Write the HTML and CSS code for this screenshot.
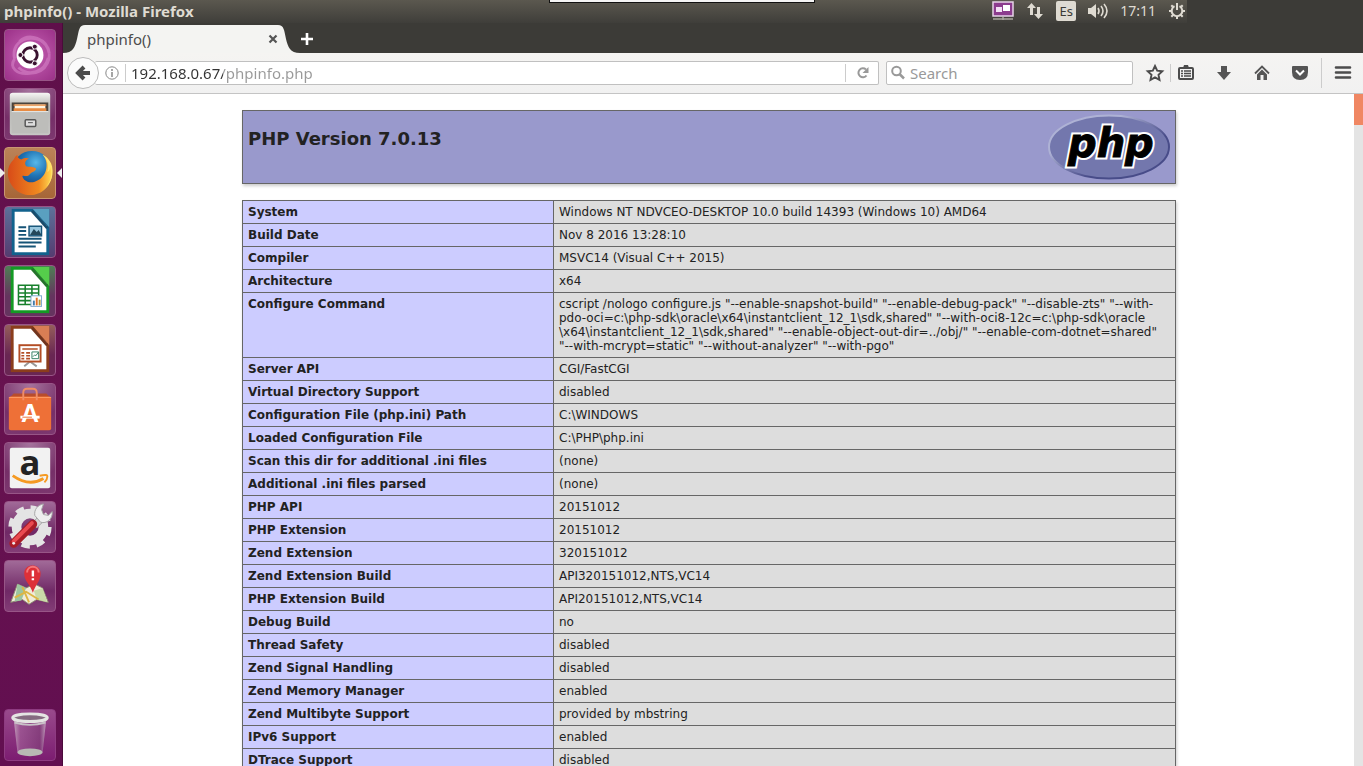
FILE: index.html
```html
<!DOCTYPE html>
<html lang="en">
<head>
<meta charset="utf-8">
<title>phpinfo() - Mozilla Firefox</title>
<link rel="stylesheet" href="styles.css">
</head>
<body>
<header class="panel">
  <span class="panel-title">phpinfo() - Mozilla Firefox</span>
  <div class="remote-handle"></div>
  <div class="indicators">
    <svg width="22" height="20" viewBox="0 0 22 20"><rect x="1" y="1" width="20" height="14" fill="#8c3c8e" stroke="#e6d3e8" stroke-width="1.5"/><rect x="4" y="6" width="6" height="5" fill="#f3dff5"/><rect x="11" y="4" width="7" height="6" fill="#fff"/><path d="M1 18h20M11 16v3" stroke="#a9a79f" stroke-width="1.5"/></svg>
    <svg width="18" height="18" viewBox="0 0 18 18" fill="#dfdbd2"><path d="M5.500 1L10 6H7v7H4V6H1zM12.500 17L8 12h3V5h3v7h3z"/></svg>
    <span class="lang">Es</span>
    <svg width="20" height="18" viewBox="0 0 20 18"><path d="M0 6h3l5-4v14l-5-4H0z" fill="#dfdbd2"/><path d="M10 6q2 3 0 6M13 4q4 5 0 10M16 2q6 7 0 14" fill="none" stroke="#dfdbd2" stroke-width="1.6"/></svg>
    <time class="clock">17:11</time>
    <svg width="18" height="18" viewBox="0 0 18 18" fill="none" stroke="#dfdbd2" stroke-width="2"><path d="M6.500 4.200a5.300 5.300 0 1 0 5 0"/><path d="M9 1v7M1 9h3M14 9h3M3.300 14.700l2-2M14.700 14.700l-2-2M9 14v3M3.300 3.300l1.500 1.500M14.700 3.300l-1.500 1.500"/></svg>
  </div>
</header>
<div class="desktop">
  <nav class="launcher" aria-label="Launcher">
    <button class="tile dash" aria-label="Dash"><svg viewBox="0 0 52 52"><path d="M10 30C5 10 30 2 42 15M42 15c9 12 2 30-16 30M26 45C12 47 4 39 10 30M15 12c10-10 29-3 31 12M45 29c-4 15-20 20-31 10" fill="none" stroke="#dd8dd0" stroke-width="3" opacity=".5"/><circle cx="26" cy="26" r="14" fill="#fff"/><circle cx="26" cy="26" r="7.500" fill="none" stroke="#3a1230" stroke-width="3"/><path d="M26 26l-11 0M26 26l5.500-9.500M26 26l5.500 9.500" stroke="#fff" stroke-width="1"/><g fill="#3a1230" stroke="#fff"><circle cx="16" cy="26" r="2.600"/><circle cx="31" cy="17.300" r="2.600"/><circle cx="31" cy="34.700" r="2.600"/></g></svg></button>
    <button class="tile files" aria-label="Files"><svg viewBox="0 0 52 52"><defs><linearGradient id="gf" x2="0" y2="1"><stop stop-color="#f6f6f4"/><stop offset=".3" stop-color="#b9b9b6"/><stop offset="1" stop-color="#c7c7c4"/></linearGradient></defs><rect x="5" y="4" width="42" height="44" rx="3" fill="url(#gf)"/><path d="M7 14h38v9H7z" fill="#4b443d"/><path d="M10 16h32v7H10z" fill="#fff3df"/><path d="M9 16h34v1.500H9zM9 20h34v3H9z" fill="#e88b43"/><path d="M7 23h38v23H7z" fill="#bdbdba"/><path d="M7 23.500h38" stroke="#e8e8e6"/><rect x="21" y="32" width="11" height="7" rx="1" fill="#ddd" stroke="#555" stroke-width="1.500"/><path d="M24 35h5" stroke="#555"/></svg></button>
    <button class="tile firefox" aria-label="Firefox"><svg viewBox="0 0 52 52"><defs><radialGradient id="gb" cx=".6" cy=".3" r=".7"><stop stop-color="#58b8e8"/><stop offset=".5" stop-color="#1f73b4"/><stop offset="1" stop-color="#133a78"/></radialGradient><linearGradient id="go" x2="1"><stop stop-color="#d84b18"/><stop offset=".7" stop-color="#f08a20"/><stop offset="1" stop-color="#ffdc55"/></linearGradient></defs><circle cx="28" cy="23" r="20" fill="url(#gb)"/><path d="M9 12c1-2 2-4 4-5 0 3 1 4 4 5 3-2 6-2 8-1-4 2-5 5-3 8 3 1 7 0 10 2 1 3-3 3-6 6-3 4-6 1-8 2 1 5 7 8 13 6 6-2 11-7 12-14 1-6-1-11-4-14 6 3 10 10 10 18C49 39 39 49 26 49S3 38 3 26c0-6 2-10 6-14z" fill="url(#go)"/><path d="M39 7c5 5 7 11 5 18 2-1 3-3 3-5 2 7 1 14-4 20 7-5 9-20 3-27-2-3-4-5-7-6z" fill="#ffe36b"/></svg></button>
    <button class="tile writer" aria-label="Writer"><svg viewBox="0 0 52 52"><rect x="7" y="2" width="39" height="48" fill="#12628d"/><path d="M10 5h20l13 14v28H10z" fill="#fff"/><path d="M29 2h17v19z" fill="#5aa0c0"/><path d="M28 4l16 18" stroke="#174b6a" stroke-width="3"/><path d="M14 21h8M14 25h8M14 29h8M14 33h24M14 37h24M14 41h18" stroke="#165477" stroke-width="2"/><rect x="25" y="20" width="13" height="10" fill="#9ac8df" stroke="#165477" stroke-width="1.500"/><path d="M26 29l4-6 3 3 2-2 3 5z" fill="#24485a"/></svg></button>
    <button class="tile calc" aria-label="Calc"><svg viewBox="0 0 52 52"><rect x="6" y="1" width="40" height="48" fill="#149a24"/><path d="M9 4h21l13 14v28H9z" fill="#fff"/><path d="M29 1h17v20z" fill="#55cd4b"/><path d="M28 3l16 18" stroke="#25732b" stroke-width="3"/><path d="M14 20h21v20H14zM14 24h21M14 28h21M14 32h21M14 36h21M21 20v20M28 20v20" fill="none" stroke="#18802c" stroke-width="1.600"/><rect x="27" y="31" width="11" height="11" fill="#fff" stroke="#7da8cf"/><path d="M30 36v5" stroke="#427cab" stroke-width="2"/><path d="M33 33v8" stroke="#df7127" stroke-width="2"/><path d="M36 35v6" stroke="#b39935" stroke-width="2"/></svg></button>
    <button class="tile impress" aria-label="Impress"><svg viewBox="0 0 52 52"><rect x="6" y="1" width="40" height="48" fill="#8b3d1c"/><path d="M9 4h21l13 14v28H9z" fill="#fff"/><path d="M29 1h17v20z" fill="#d97e54"/><path d="M28 3l16 18" stroke="#70331c" stroke-width="3"/><path d="M26 38l-6 5M26 38l7 5" stroke="#999" stroke-width="2"/><rect x="15" y="21" width="22" height="17" fill="#fff" stroke="#b34d25" stroke-width="2"/><path d="M18 25h16M17 29h3M17 32h3M17 35h3M22 29h4M22 32h4M22 35h4" stroke="#b34d25" stroke-width="1.700"/><path d="M28 28h7v7h-7zM29 33l2-2 1 1 3-4" fill="none" stroke="#378065"/></svg></button>
    <button class="tile software" aria-label="Software"><svg viewBox="0 0 52 52"><path d="M5 14l4-4h34l4 4z" fill="#b84d2c"/><rect x="4" y="13" width="44" height="35" rx="2" fill="#ee7037"/><path d="M4 14h44" stroke="#ff9c65"/><path d="M19 17V9q0-4 4-4h6q4 0 4 4v8" fill="none" stroke="#f18c64" stroke-width="2"/><text class="store-letter" x="26" y="40" text-anchor="middle">A</text><path d="M16 33h20v3H16z" fill="#fff"/><path d="M18 34.500h10" stroke="#ee7037"/></svg></button>
    <button class="tile amazon" aria-label="Amazon"><svg viewBox="0 0 52 52"><rect x="5" y="5" width="42" height="42" rx="2" fill="#f2f2f2"/><text class="amazon-letter" x="26" y="33" text-anchor="middle">a</text><path d="M8 34q17 12 32 3" fill="none" stroke="#f59a23" stroke-width="3"/><path d="M36 34q9-2 8 1 0 3-3 6" fill="none" stroke="#f59a23" stroke-width="2"/></svg></button>
    <button class="tile settings" aria-label="System Settings"><svg viewBox="0 0 52 52"><circle cx="26" cy="26" r="20" fill="none" stroke="#e4e4e4" stroke-width="5" stroke-dasharray="8.700 7.008"/><circle cx="26" cy="26" r="14" fill="none" stroke="#e4e4e4" stroke-width="10"/><path d="M28 22l9-9 5 5-9 9z" fill="#d4d4d4" stroke="#a4a4a4"/><path d="M31 14c-1-6 3-11 9-12l-2 6 2 5 5 1 4-4c1 8-6 13-12 11z" fill="#eee" stroke="#a4a4a4"/><path d="M9 43l20-20" stroke="#a91c26" stroke-width="9" stroke-linecap="round"/><path d="M9 41l19-19" stroke="#ea4a50" stroke-width="4" stroke-linecap="round"/><circle cx="9" cy="43" r="1.500" fill="#eee"/></svg></button>
    <button class="tile maps" aria-label="Maps"><svg viewBox="0 0 52 52"><path d="M13 24l9 4 9-4 8 4 6 15-12-3-8 5-7-5-12 3z" fill="#f0ecd9" stroke="#8c8a70"/><path d="M13 24l-3 18 7-1 5-13z" fill="#9cc5a0"/><path d="M39 28l-9 3 3 9 11 3z" fill="#cadba8"/><path d="M10 38l12-6 13 8M18 27l7 16" fill="none" stroke="#ddb644" stroke-width="2"/><path d="M29 33c-3-9-9-12-9-20 0-11 17-11 17 0 0 8-5 11-8 20z" fill="#dd3038"/><path d="M23 12c0-8 12-8 12 0" fill="none" stroke="#f3777a" stroke-width="2"/><path d="M29 10v6M29 18v2" stroke="#fff" stroke-width="2.500"/></svg></button>
    <button class="tile trash" aria-label="Trash"><svg viewBox="0 0 52 52"><defs><linearGradient id="gt" x2="1"><stop stop-color="#d0b9ca" stop-opacity=".8"/><stop offset=".2" stop-color="#a4649b" stop-opacity=".6"/><stop offset=".8" stop-color="#81437a" stop-opacity=".6"/><stop offset="1" stop-color="#d2bfcf" stop-opacity=".8"/></linearGradient></defs><path d="M9 9l4 36q13 5 26 0l4-36z" fill="url(#gt)"/><ellipse cx="26" cy="44" rx="13" ry="4" fill="#b8bab4"/><ellipse cx="26" cy="8" rx="18" ry="4" fill="#856b80" stroke="#e5e5e3" stroke-width="3"/><path d="M10 13q16 5 32 0" fill="none" stroke="#c9c2c8" stroke-width="2"/></svg></button>
  </nav>
  <main class="window">
    <div class="tabstrip">
      <div class="tab">
        <svg class="tab-edge" width="22" height="30" viewBox="0 0 22 30"><path d="M0 30c10 0 12-6 14-14C16 7 16 2 22 2v28z" fill="#f4f4f2"/></svg>
        <div class="tab-body"><span>phpinfo()</span><button class="plain" aria-label="Close tab"><svg width="10" height="10" viewBox="0 0 10 10"><path d="M1.500 1.500l7 7M8.500 1.500l-7 7" stroke="#555" stroke-width="2.200"/></svg></button></div>
        <svg class="tab-edge" width="22" height="30" viewBox="0 0 22 30"><path d="M22 30c-10 0-12-6-14-14C6 7 6 2 0 2v28z" fill="#f4f4f2"/></svg>
      </div>
      <button class="plain new-tab" aria-label="New tab"><svg width="14" height="14" viewBox="0 0 14 14"><path d="M7 1v12M1 7h12" stroke="#fff" stroke-width="2.600"/></svg></button>
    </div>
    <div class="toolbar">
      <button class="plain back" aria-label="Back"><svg width="16" height="16" viewBox="0 0 16 16"><path d="M9 2L3 8l6 6M4 8h11" fill="none" stroke="#4c4c4c" stroke-width="4"/></svg></button>
      <div class="field address">
        <svg width="14" height="14" viewBox="0 0 14 14"><circle cx="7" cy="7" r="6.200" fill="none" stroke="#888"/><path d="M7 3v2M7 6v5" stroke="#888" stroke-width="1.500"/></svg>
        <i class="rule"></i>
        <input class="url" type="text" aria-label="Address" value="192.168.0.67/phpinfo.php">
        <i class="rule"></i>
        <button class="plain reload" aria-label="Reload"><svg width="14" height="14" viewBox="0 0 14 14"><path d="M10.500 9.500A4.500 4.500 0 1 1 10 3.500" fill="none" stroke="#999" stroke-width="2"/><path d="M12.500 1v6h-6z" fill="#999"/></svg></button>
      </div>
      <div class="field search">
        <svg width="16" height="16" viewBox="0 0 16 16"><circle cx="6.500" cy="6" r="4.300" fill="none" stroke="#999" stroke-width="2"/><path d="M9.500 9l4.500 4.500" stroke="#999" stroke-width="2.500"/></svg>
        <input type="text" aria-label="Search" placeholder="Search">
      </div>
      <div class="tools">
        <button class="plain" aria-label="Bookmark"><svg viewBox="0 0 18 18"><path d="M9 2l2.200 4.700 5.100.6-3.800 3.500 1 5.100L9 13.400l-4.500 2.500 1-5.100-3.800-3.500 5.100-.6z" fill="none" stroke="#4c4c4c" stroke-width="1.900"/></svg></button>
        <i class="rule short"></i>
        <button class="plain" aria-label="Bookmarks list"><svg viewBox="0 0 18 18"><path d="M6 4l1-3h4l1 3z" fill="#4c4c4c"/><rect x="2" y="4" width="14" height="11" rx="1" fill="#f3f3f3" stroke="#4c4c4c" stroke-width="2"/><path d="M4 7h2M7 7h7M4 9.500h2M7 9.500h7M4 12h2M7 12h7" stroke="#4c4c4c" stroke-width="1.300"/></svg></button>
        <button class="plain" aria-label="Downloads"><svg viewBox="0 0 18 18"><path d="M6 2h6v6h4l-7 8-7-8h4z" fill="#555"/></svg></button>
        <button class="plain" aria-label="Home"><svg viewBox="0 0 18 18"><path d="M2 9.500l7-7 7 7" fill="none" stroke="#555" stroke-width="1.800"/><path d="M4 10.500l5-5 5 5V16h-3.500v-5h-3v5H4z" fill="#555"/></svg></button>
        <button class="plain" aria-label="Pocket"><svg viewBox="0 0 18 18"><path d="M2 2h14q1 0 1 1v5q0 8-8 8T1 8V3q0-1 1-1z" fill="#555"/><path d="M5 6.500l4 4 4-4" fill="none" stroke="#fff" stroke-width="2"/></svg></button>
        <i class="rule tall"></i>
        <button class="plain" aria-label="Menu"><svg viewBox="0 0 18 18"><path d="M2 3.500h14M2 8.500h14M2 13.500h14" stroke="#4c4c4c" stroke-width="2.600" stroke-linecap="round"/></svg></button>
      </div>
    </div>
    <div class="viewport">
      <div class="page">
        <div class="banner">
          <h1>PHP Version 7.0.13</h1>
          <svg width="122" height="66" viewBox="0 0 122 66" role="img" aria-label="PHP logo"><defs><linearGradient id="rim" x2="1" y2="1"><stop offset=".3" stop-color="#aeb2d5"/><stop offset=".65" stop-color="#484c89"/></linearGradient></defs><ellipse cx="60" cy="33" rx="60" ry="31.500" fill="#7377ad" stroke="url(#rim)" stroke-width="2"/><g class="php-text"><text class="halo" x="19" y="43">php</text><text class="ink" x="19" y="43" aria-hidden="true">php</text></g></svg>
        </div>
        <table class="info">
          <tbody>
          <tr><th scope="row">System</th><td>Windows NT NDVCEO-DESKTOP 10.0 build 14393 (Windows 10) AMD64</td></tr>
          <tr><th scope="row">Build Date</th><td>Nov 8 2016 13:28:10</td></tr>
          <tr><th scope="row">Compiler</th><td>MSVC14 (Visual C++ 2015)</td></tr>
          <tr><th scope="row">Architecture</th><td>x64</td></tr>
          <tr><th scope="row">Configure Command</th><td>cscript /nologo configure.js "--enable-snapshot-build" "--enable-debug-pack" "--disable-zts" "--with-<br>pdo-oci=c:\php-sdk\oracle\x64\instantclient_12_1\sdk,shared" "--with-oci8-12c=c:\php-sdk\oracle<br>\x64\instantclient_12_1\sdk,shared" "--enable-object-out-dir=../obj/" "--enable-com-dotnet=shared"<br>"--with-mcrypt=static" "--without-analyzer" "--with-pgo"</td></tr>
          <tr><th scope="row">Server API</th><td>CGI/FastCGI</td></tr>
          <tr><th scope="row">Virtual Directory Support</th><td>disabled</td></tr>
          <tr><th scope="row">Configuration File (php.ini) Path</th><td>C:\WINDOWS</td></tr>
          <tr><th scope="row">Loaded Configuration File</th><td>C:\PHP\php.ini</td></tr>
          <tr><th scope="row">Scan this dir for additional .ini files</th><td>(none)</td></tr>
          <tr><th scope="row">Additional .ini files parsed</th><td>(none)</td></tr>
          <tr><th scope="row">PHP API</th><td>20151012</td></tr>
          <tr><th scope="row">PHP Extension</th><td>20151012</td></tr>
          <tr><th scope="row">Zend Extension</th><td>320151012</td></tr>
          <tr><th scope="row">Zend Extension Build</th><td>API320151012,NTS,VC14</td></tr>
          <tr><th scope="row">PHP Extension Build</th><td>API20151012,NTS,VC14</td></tr>
          <tr><th scope="row">Debug Build</th><td>no</td></tr>
          <tr><th scope="row">Thread Safety</th><td>disabled</td></tr>
          <tr><th scope="row">Zend Signal Handling</th><td>disabled</td></tr>
          <tr><th scope="row">Zend Memory Manager</th><td>enabled</td></tr>
          <tr><th scope="row">Zend Multibyte Support</th><td>provided by mbstring</td></tr>
          <tr><th scope="row">IPv6 Support</th><td>enabled</td></tr>
          <tr><th scope="row">DTrace Support</th><td>disabled</td></tr>
          </tbody>
        </table>
      </div>
      <div class="scrollbar"><div class="thumb"></div></div>
    </div>
  </main>
</div>
</body>
</html>
```
FILE: styles.css
```css
* { box-sizing: border-box; }
body {
  margin: 0;
  height: 100vh;
  overflow: hidden;
  display: flex;
  flex-direction: column;
  font-family: "Noto Sans", "Open Sans", sans-serif;
  font-size: 15px;
  color: #4c4c4c;
}
svg { display: block; overflow: visible; }
input {
  border: 0;
  padding: 0;
  background: none;
  font: inherit;
  outline: 0;
  min-width: 0;
}
.plain {
  border: 0;
  padding: 0;
  background: none;
  display: grid;
  place-items: center;
}

/* Top panel */
.panel {
  position: relative;
  flex: none;
  height: 23px;
  display: flex;
  align-items: center;
  justify-content: space-between;
  padding: 0 177px 1px 4px;
  background: linear-gradient(#5b584f, #3f3e3a);
  color: #dfdbd2;
}
.panel::after {
  content: "";
  position: absolute;
  inset: 0 0 0 auto;
  width: 176px;
  background: #3c3b37;
}
.panel-title {
  font-weight: 700;
  font-size: 15px;
  line-height: 20px;
}
.remote-handle {
  position: absolute;
  top: 0;
  left: 50%;
  width: 266px;
  height: 3px;
  transform: translateX(-50%);
  background: #f4f4f4;
  border: 1px solid #111;
  border-top: 0;
}
.indicators {
  display: flex;
  align-items: center;
  gap: 12px;
}
.lang {
  width: 20px;
  height: 20px;
  border-radius: 2px;
  background: #dfdbd2;
  color: #3c3b37;
  font-size: 13px;
  line-height: 20px;
  text-align: center;
}
.clock { font-size: 14px; line-height: 20px; }

.desktop {
  flex: 1;
  min-height: 0;
  display: flex;
}

/* Launcher */
.launcher {
  flex: none;
  width: 63px;
  display: flex;
  flex-direction: column;
  gap: 7px;
  padding: 6px 0 5px 4px;
  background: linear-gradient(#5f0f4a, #67124f 50%, #620f50);
  border-right: 1px solid #4b0a3b;
}
.tile {
  flex: none;
  position: relative;
  width: 52px;
  height: 52px;
  padding: 0;
  border: 1px solid #985587;
  border-radius: 4px;
  background: radial-gradient(circle at 50% 0, #a5739d, #762f68 65%, #7d3870);
}
.tile svg { width: 50px; height: 50px; }
.dash { background: radial-gradient(circle, #c864b6, #9b3188); }
.firefox { background: linear-gradient(#bb8258, #a66638); border-color: #c99673; }
.writer { background: linear-gradient(#5d719a, #553c70); }
.calc { background: linear-gradient(#4e8054, #65345f 60%); }
.impress { background: linear-gradient(#955e5a, #692653 60%); }
.settings, .maps { background: linear-gradient(#a16a98, #702966 60%, #833c76); }
.firefox::before, .firefox::after {
  content: "";
  position: absolute;
  top: 20px;
  border: 5px solid transparent;
}
.firefox::before { left: -5px; border-left-color: #eee; border-right: 0; }
.firefox::after { right: -7px; border-right-color: #eee; border-left: 0; }
.trash { margin-top: auto; background: linear-gradient(#994a8c, #7c1d71); border-color: #8e3b81; }
.store-letter {
  font: 700 26px "Liberation Sans", sans-serif;
  fill: #fff;
}
.amazon-letter {
  font: 700 36px "Open Sans", sans-serif;
  fill: #222;
}

/* Browser chrome */
.window {
  flex: 1;
  min-width: 0;
  display: flex;
  flex-direction: column;
  background: #fff;
}
.tabstrip {
  flex: none;
  display: flex;
  height: 30px;
  background: #3c3b37;
}
.tab { display: flex; }
.tab-edge { flex: none; }
.tab-body {
  width: 193px;
  margin-top: 2px;
  padding: 0 0 1px 2px;
  display: flex;
  align-items: center;
  justify-content: space-between;
  background: #f4f4f2;
  color: #4c4c4c;
  line-height: 20px;
}
.new-tab { width: 12px; height: 32px; }
.toolbar {
  flex: none;
  height: 41px;
  display: flex;
  align-items: center;
  padding: 0 11px 0 4px;
  background: linear-gradient(#f5f4f2, #f1f1f1);
  border-bottom: 1px solid #c4c4c4;
}
.back {
  position: relative;
  flex: none;
  width: 32px;
  height: 32px;
  border: 1px solid #bbb;
  border-radius: 50%;
  background: #fbfbfb;
}
.field {
  display: flex;
  align-items: center;
  height: 24px;
  background: #fff;
  border: 1px solid #c0c0c0;
  border-radius: 2px;
}
.address {
  flex: 789 1 0;
  margin-left: -4px;
  padding-left: 10px;
  border-left: 0;
}
.rule {
  flex: none;
  width: 1px;
  height: 18px;
  margin: 0 5px 0 6px;
  background: #ccc;
}
.url {
  flex: 1;
  height: 22px;
  color: transparent;
  caret-color: #333;
  background: linear-gradient(90deg, #333 92px, #999 92px);
  -webkit-background-clip: text;
  background-clip: text;
}
.reload { width: 24px; margin-right: 3px; }
.search {
  flex: 242 1 0;
  margin-left: 7px;
  padding-left: 3px;
  gap: 4px;
}
.search input { flex: 1; }
.search input::placeholder { color: #999; opacity: 1; }
.tools {
  flex: none;
  display: flex;
  align-items: center;
  gap: 20px;
  margin-left: 13px;
}
.tools svg { width: 18px; height: 18px; }
.tools .short { margin: 0 -14px; }
.tools .tall { height: 30px; margin: 0 -8px; }

/* Page */
.viewport {
  flex: 1;
  min-height: 0;
  display: flex;
}
.page {
  flex: 1;
  min-width: 0;
  overflow: hidden;
  padding: 16px 16px 16px 17px;
  font-family: "DejaVu Sans", sans-serif;
  font-size: 12px;
  line-height: 14px;
  color: #222;
}
.banner, .info {
  width: 100%;
  max-width: 934px;
  margin: 0 auto 16px;
  box-shadow: 1px 2px 3px #ccc;
}
.banner {
  display: flex;
  justify-content: space-between;
  padding: 3px 4px 3px 5px;
  min-height: 74px;
  background: #9999cc;
  border: 1px solid #666;
}
h1 {
  margin: 14px 0;
  font-size: 18px;
  line-height: 22px;
}
.php-text {
  font: italic 700 40px "DejaVu Sans", sans-serif;
  stroke-linejoin: miter;
}
.halo { fill: #fff; stroke: #fff; stroke-width: 5px; }
.ink { fill: #000; stroke: #000; stroke-width: 1px; }
.info { border-collapse: collapse; }
.info th, .info td {
  padding: 4px 5px;
  border: 1px solid #666;
  text-align: left;
  vertical-align: top;
}
.info th { width: 311px; background: #ccccff; }
.info td { background: #dddddd; }
.scrollbar {
  flex: none;
  width: 9px;
  background: #e4e4e4;
}
.thumb { height: 31px; background: #f08763; }
```
